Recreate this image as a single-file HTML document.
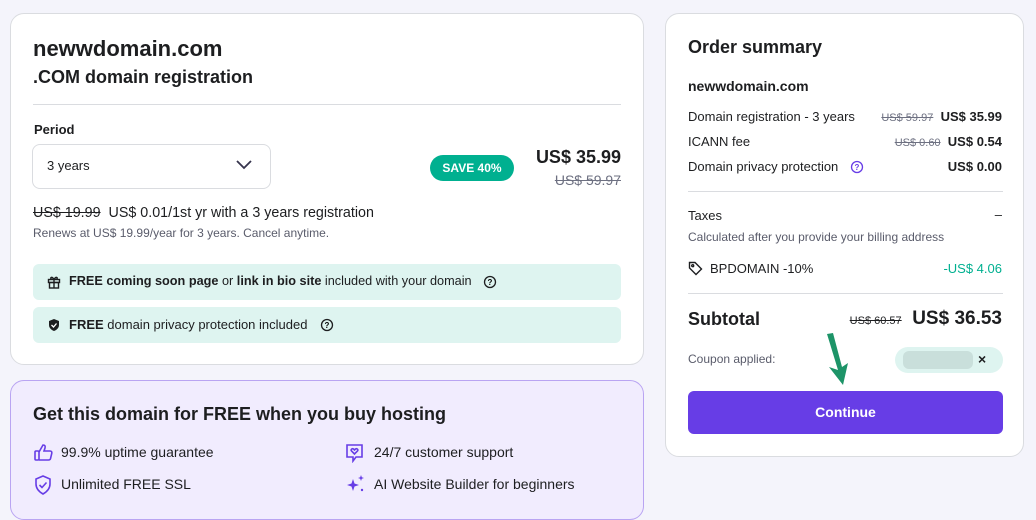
<!DOCTYPE html>
<html><head><meta charset="utf-8"><style>
*{box-sizing:border-box;margin:0;padding:0}
body{width:1036px;height:506px;overflow:hidden;background:#f4f4fb;font-family:"Liberation Sans",sans-serif;color:#1d1e20;position:relative}
.a{position:absolute;white-space:nowrap}
.card{position:absolute;background:#fff;border:1px solid #dadce0;border-radius:14px}
s{color:#6d7081}
.g{color:#5a5c6b}
</style></head><body>
<div class="card" style="left:10px;top:13px;width:634px;height:352px"></div>
<div class="a" style="left:33px;top:36px;font-size:22px;font-weight:bold">newwdomain.com</div>
<div class="a" style="left:33px;top:67px;font-size:18px;font-weight:bold">.COM domain registration</div>
<div class="a" style="left:33px;top:104px;width:588px;height:1px;background:#dadce0"></div>
<div class="a" style="left:34px;top:122px;font-size:13px;font-weight:bold">Period</div>
<div class="a" style="left:32px;top:144px;width:239px;height:45px;border:1px solid #dadce0;border-radius:8px"></div>
<div class="a" style="left:47px;top:158px;font-size:13px">3 years</div>
<svg class="a" style="left:235px;top:159px" width="18" height="12" viewBox="0 0 18 12"><path d="M2 2l7 7 7-7" fill="none" stroke="#36344d" stroke-width="1.8"/></svg>
<div class="a" style="left:430px;top:155px;width:84px;height:26px;background:#00b090;border-radius:13px;color:#fff;font-size:12px;font-weight:bold;text-align:center;line-height:26px">SAVE 40%</div>
<div class="a" style="right:415px;top:147px;font-size:18px;font-weight:bold">US$ 35.99</div>
<div class="a" style="right:415px;top:172px;font-size:14px"><s>US$ 59.97</s></div>
<div class="a" style="left:33px;top:205px;font-size:14.3px"><s style="color:#1d1e20">US$ 19.99</s>&nbsp; US$ 0.01/1st yr with a 3 years registration</div>
<div class="a g" style="left:33px;top:226px;font-size:12px">Renews at US$ 19.99/year for 3 years. Cancel anytime.</div>
<div class="a" style="left:33px;top:264px;width:588px;height:36px;background:#def4f0;border-radius:6px"></div>
<div class="a" style="left:33px;top:307px;width:588px;height:36px;background:#def4f0;border-radius:6px"></div>
<svg class="a" style="left:47px;top:275px" width="14" height="14" viewBox="0 0 14 14" fill="none" stroke="#1d1e20" stroke-width="1.4"><rect x="1.5" y="4.5" width="11" height="3"/><rect x="2.5" y="7.5" width="9" height="5.5"/><path d="M7 4.5v8.5M7 4.5C5 1 2.5 2.5 4.5 4.5M7 4.5C9 1 11.5 2.5 9.5 4.5"/></svg>
<div class="a" style="left:69px;top:274px;font-size:12.7px"><b>FREE coming soon page</b> or <b>link in bio site</b> included with your domain</div>
<svg class="a" style="left:483px;top:275px" width="14" height="14" viewBox="0 0 14 14"><circle cx="7" cy="7" r="5.5" fill="none" stroke="#1d1e20" stroke-width="1.3"/><text x="7" y="10" font-size="8" font-weight="bold" text-anchor="middle" font-family="Liberation Sans">?</text></svg>
<svg class="a" style="left:47px;top:318px" width="14" height="14" viewBox="0 0 14 14"><path d="M7 1l5 2v4c0 3-2.5 5-5 6-2.5-1-5-3-5-6V3z" fill="#1d1e20"/><path d="M4.5 7l2 2 3-3.5" fill="none" stroke="#fff" stroke-width="1.3"/></svg>
<div class="a" style="left:69px;top:317px;font-size:13px"><b>FREE</b> domain privacy protection included</div>
<svg class="a" style="left:320px;top:318px" width="14" height="14" viewBox="0 0 14 14"><circle cx="7" cy="7" r="5.5" fill="none" stroke="#1d1e20" stroke-width="1.3"/><text x="7" y="10" font-size="8" font-weight="bold" text-anchor="middle" font-family="Liberation Sans">?</text></svg>

<div class="a" style="left:10px;top:380px;width:634px;height:140px;background:#f1ecfe;border:1px solid #b9a4f2;border-radius:14px"></div>
<div class="a" style="left:33px;top:404px;font-size:18px;font-weight:bold">Get this domain for FREE when you buy hosting</div>
<svg class="a" style="left:34px;top:443px" width="20" height="18" viewBox="0 0 20 18" fill="none" stroke="#673de6" stroke-width="1.6"><rect x="1" y="8" width="4" height="9" rx="1"/><path d="M5 9l4-7c2 0 2.5 1 2 3l-1 3h6c1.5 0 2 1 1.8 2.2l-1.3 5.5c-.3 1-1 1.3-2 1.3H5"/></svg>
<div class="a" style="left:61px;top:444px;font-size:14px">99.9% uptime guarantee</div>
<svg class="a" style="left:345px;top:443px" width="20" height="20" viewBox="0 0 20 20" fill="none" stroke="#673de6" stroke-width="1.6"><path d="M2 2h15v12h-6l-3 4v-4H2z"/><path d="M9.5 11l-3-3c-1-1.2.5-3 2-2l1 1 1-1c1.5-1 3 .8 2 2z"/></svg>
<div class="a" style="left:374px;top:444px;font-size:14px">24/7 customer support</div>
<svg class="a" style="left:34px;top:475px" width="18" height="20" viewBox="0 0 18 20" fill="none" stroke="#673de6" stroke-width="1.6"><path d="M9 1l7 3v5c0 5-3.5 8-7 10-3.5-2-7-5-7-10V4z"/><path d="M5.5 10l2.5 2.5 4.5-5"/></svg>
<div class="a" style="left:61px;top:476px;font-size:14px">Unlimited FREE SSL</div>
<svg class="a" style="left:346px;top:474px" width="20" height="20" viewBox="0 0 20 20" fill="#673de6"><path d="M7 5l1.5 4.5L13 11l-4.5 1.5L7 17l-1.5-4.5L1 11l4.5-1.5z"/><path d="M15 1l.8 2.2L18 4l-2.2.8L15 7l-.8-2.2L12 4l2.2-.8z"/><circle cx="16" cy="16" r="1.2"/></svg>
<div class="a" style="left:374px;top:476px;font-size:14px">AI Website Builder for beginners</div>

<div class="card" style="left:665px;top:13px;width:359px;height:444px"></div>
<div class="a" style="left:688px;top:37px;font-size:18px;font-weight:bold">Order summary</div>
<div class="a" style="left:688px;top:78px;font-size:14px;font-weight:bold">newwdomain.com</div>
<div class="a" style="left:688px;top:109px;font-size:13px">Domain registration - 3 years</div>
<div class="a" style="right:34px;top:109px;font-size:13px"><s style="font-size:11px">US$ 59.97</s>&nbsp; <b>US$ 35.99</b></div>
<div class="a" style="left:688px;top:134px;font-size:13px">ICANN fee</div>
<div class="a" style="right:34px;top:134px;font-size:13px"><s style="font-size:11px">US$ 0.60</s>&nbsp; <b>US$ 0.54</b></div>
<div class="a" style="left:688px;top:159px;font-size:13px">Domain privacy protection</div>
<svg class="a" style="left:850px;top:160px" width="14" height="14" viewBox="0 0 14 14"><circle cx="7" cy="7" r="5.5" fill="none" stroke="#673de6" stroke-width="1.3"/><text x="7" y="10" font-size="8" font-weight="bold" fill="#673de6" text-anchor="middle" font-family="Liberation Sans">?</text></svg>
<div class="a" style="right:34px;top:159px;font-size:13px;font-weight:bold">US$ 0.00</div>
<div class="a" style="left:688px;top:191px;width:315px;height:1px;background:#dadce0"></div>
<div class="a" style="left:688px;top:208px;font-size:13px">Taxes</div>
<div class="a" style="right:34px;top:207px;font-size:13px">–</div>
<div class="a g" style="left:688px;top:230px;font-size:12px">Calculated after you provide your billing address</div>
<svg class="a" style="left:688px;top:261px" width="15" height="15" viewBox="0 0 15 15" fill="none" stroke="#1d1e20" stroke-width="1.4"><path d="M1.5 1.5h5.5l6.5 6.5-5.5 5.5L1.5 7z"/><circle cx="4.7" cy="4.7" r="1"/></svg>
<div class="a" style="left:710px;top:261px;font-size:13px">BPDOMAIN -10%</div>
<div class="a" style="right:34px;top:261px;font-size:13px;color:#00b090">-US$ 4.06</div>
<div class="a" style="left:688px;top:293px;width:315px;height:1px;background:#dadce0"></div>
<div class="a" style="left:688px;top:309px;font-size:18px;font-weight:bold">Subtotal</div>
<div class="a" style="right:34px;top:308px;font-size:19px;font-weight:bold"><s style="font-size:11px;font-weight:normal;color:#1d1e20">US$ 60.57</s>&nbsp; US$ 36.53</div>
<div class="a g" style="left:688px;top:352px;font-size:12px">Coupon applied:</div>
<div class="a" style="left:895px;top:347px;width:108px;height:26px;background:#def4f0;border-radius:13px"></div>
<div class="a" style="left:903px;top:351px;width:70px;height:18px;background:#c9dfdb;border-radius:6px"></div>
<div class="a" style="left:978px;top:351px;font-size:14px;font-weight:bold">×</div>
<svg class="a" style="left:824px;top:332px" width="28" height="56" viewBox="0 0 28 56"><path d="M3 2l11 36-9-3 14 18 5-22-6 4L9 1z" fill="#1d9468"/></svg>
<div class="a" style="left:688px;top:391px;width:315px;height:43px;background:#673de6;border-radius:6px;color:#fff;font-size:14px;font-weight:bold;text-align:center;line-height:43px">Continue</div>
</body></html>
